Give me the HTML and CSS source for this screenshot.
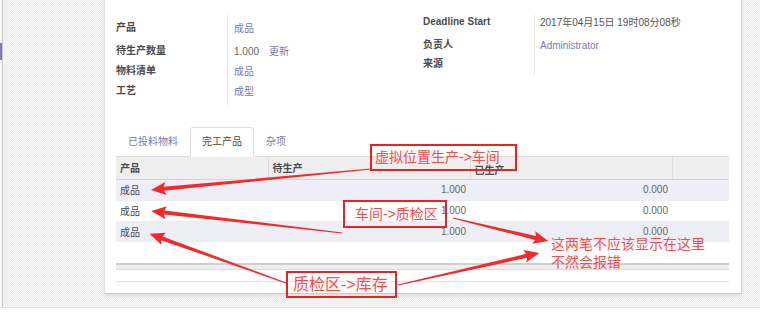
FILE: index.html
```html
<!DOCTYPE html>
<html lang="zh-CN">
<head>
<meta charset="utf-8">
<title>制造订单</title>
<link rel="stylesheet" href="styles.css">
</head>
<body>
<div class="app">
  <div class="main">
    <div class="sidebar"><div class="sidebar-mark"></div></div>
    <div class="workspace">
      <div class="sheet">
        <div class="groups">
          <div class="group group-left">
            <div class="field fa1"><div class="label">产品</div><div class="value link">成品</div></div>
            <div class="field fa2"><div class="label">待生产数量</div><div class="value"><span class="qty">1.000</span><span class="link update">更新</span></div></div>
            <div class="field fa3"><div class="label">物料清单</div><div class="value link">成品</div></div>
            <div class="field fa4"><div class="label">工艺</div><div class="value link">成型</div></div>
          </div>
          <div class="group group-right">
            <div class="field fb1"><div class="label">Deadline Start</div><div class="value">2017年04月15日 19时08分08秒</div></div>
            <div class="field fb2"><div class="label">负责人</div><div class="value link">Administrator</div></div>
            <div class="field fb3"><div class="label">来源</div><div class="value"></div></div>
          </div>
        </div>

        <div class="tabs">
          <div class="tab">已投料物料</div>
          <div class="tab active">完工产品</div>
          <div class="tab">杂项</div>
        </div>

        <table class="list">
          <colgroup>
            <col class="c1"><col class="c2"><col class="c3"><col class="c4">
          </colgroup>
          <thead>
            <tr><th>产品</th><th>待生产</th><th class="th-done">已生产</th><th></th></tr>
          </thead>
          <tbody>
            <tr class="odd"><td>成品</td><td class="num">1.000</td><td class="num">0.000</td><td></td></tr>
            <tr><td>成品</td><td class="num">1.000</td><td class="num">0.000</td><td></td></tr>
            <tr class="odd"><td>成品</td><td class="num">1.000</td><td class="num">0.000</td><td></td></tr>
          </tbody>
        </table>
        <div class="list-foot"></div>
        <div class="sheet-sep"></div>
      </div>
    </div>
  </div>
  <div class="bottom"></div>

  <div class="annotations">
    <svg class="arrows" width="760" height="320" viewBox="0 0 760 320">
      <g fill="#f42a2a">
        <path transform="translate(371 169) rotate(174.55)" d="M0,-0.5 L208,-2 L206,-6.5 L221,0 L206,6.5 L208,2 L0,0.5 Z"/>
        <path transform="translate(342 233) rotate(186.57)" d="M0,-0.5 L179,-2 L177,-6.5 L192,0 L177,6.5 L179,2 L0,0.5 Z"/>
        <path transform="translate(286 283) rotate(-160.19)" d="M0,-0.5 L132,-2 L130,-6.5 L145,0 L130,6.5 L132,2 L0,0.5 Z"/>
        <path transform="translate(453 218) rotate(13.61)" d="M0,-0.5 L85,-2 L83,-6.5 L98,0 L83,6.5 L85,2 L0,0.5 Z"/>
        <path transform="translate(398 285) rotate(-12.79)" d="M0,-0.5 L132,-2 L130,-6.5 L145,0 L130,6.5 L132,2 L0,0.5 Z"/>
      </g>
    </svg>
    <div class="anno-box box-1">虚拟位置生产-&gt;车间</div>
    <div class="anno-box box-2">车间-&gt;质检区</div>
    <div class="anno-box box-3">质检区-&gt;库存</div>
    <div class="anno-note">这两笔不应该显示在这里<br>不然会报错</div>
  </div>
</div>
</body>
</html>
```
FILE: styles.css
```css
* { box-sizing: border-box; }

html, body {
  margin: 0;
  padding: 0;
}

body {
  width: 760px;
  height: 320px;
  overflow: hidden;
  font-family: "Liberation Sans", Arial, "Noto Sans CJK SC", sans-serif;
  font-size: 10px;
  color: #4c4c4c;
  background: #fff;
}

.app {
  position: relative;
  width: 760px;
  height: 320px;
  background: #fff;
}

.main {
  display: flex;
  height: 308px;
  border-bottom: 1px solid #dedede;
  background-color: #f3f3f3;
  background-image: conic-gradient(#ececec 25%, #f8f8f8 0 50%, #ececec 0 75%, #f8f8f8 0);
  background-size: 2px 2px;
}

.sidebar {
  width: 3px;
  background: #f7f7f7;
  border-right: 1px solid #c9c9c9;
}

.sidebar-mark {
  margin-top: 43px;
  width: 2px;
  height: 17px;
  background: #7c7bad;
}

.workspace {
  flex: 1;
  padding-left: 101px;
}

.sheet {
  width: 638px;
  background: #fff;
  border-left: 1px solid #e2e2e2;
  border-right: 1px solid #d4d4d4;
  border-bottom: 1px solid #cbcbcb;
  box-shadow: 0 2px 4px rgba(0, 0, 0, 0.08);
  padding: 0 12px 11px 11px;
}

/* ---------- field groups ---------- */
.groups {
  display: flex;
  padding-top: 15px;
}

.group-left { width: 307px; }
.group-right { flex: 1; }

.field {
  display: flex;
}

.label {
  width: 111px;
  line-height: 14px;
  font-weight: bold;
  color: #4c4c4c;
  white-space: nowrap;
}

.value {
  flex: 1;
  line-height: 14px;
  border-left: 1px solid #e6e6e6;
  padding-left: 6px;
  color: #555;
  white-space: nowrap;
}

.group-right .value { padding-left: 5px; }

.link { color: #7c7bad; }
.qty { color: #666; }
.update { margin-left: 10px; }

.fa1 { height: 29px; }
.fa1 .label { padding-top: 6px; }
.fa1 .value { padding-top: 7px; }
.fa2 { height: 20px; }
.fa3 { height: 20px; }
.fa4 { height: 21px; }
.fa2 .value, .fa3 .value, .fa4 .value { padding-top: 1px; }

.fb1 { height: 23px; }
.fb2 { height: 19px; }
.fb3 { height: 18px; }
.fb1 .value, .fb2 .value { padding-top: 1px; }

/* ---------- tabs ---------- */
.tabs {
  display: flex;
  margin-top: 22px;
  height: 30px;
  border-bottom: 1px solid #dddddd;
}

.tab {
  height: 30px;
  padding: 0 11px;
  line-height: 28px;
  border: 1px solid transparent;
  border-radius: 3px 3px 0 0;
  color: #7c7bad;
  white-space: nowrap;
}

.tab.active {
  border-color: #dddddd #dddddd #ffffff;
  background: #fff;
  color: #4c4c4c;
}

/* ---------- list ---------- */
.list {
  width: 613px;
  border-collapse: collapse;
  table-layout: fixed;
}

.c1 { width: 152px; }
.c2 { width: 202px; }
.c3 { width: 202px; }
.c4 { width: 57px; }

.list th {
  height: 22px;
  padding: 0 3px 0 4px;
  background: #eeeeee;
  border-bottom: 1px solid #d6d6d6;
  border-left: 1px solid #dcdcdc;
  text-align: left;
  font-weight: bold;
  color: #4c4c4c;
  white-space: nowrap;
}

.list th:first-child { border-left: 0; }

.list th.th-done {
  padding-top: 6px;
  line-height: 12px;
  overflow: hidden;
}

.list td {
  height: 21px;
  padding: 0 4px;
  border-top: 1px solid #ececf2;
  color: #4c4c4c;
}

.list tbody tr:first-child td { border-top: 0; }

.list tr.odd td { background: #eeeef6; }

.list td.num {
  text-align: right;
  color: #666;
}

.list-foot {
  margin-top: 21px;
  height: 7px;
  border-top: 2px solid #cfcfcf;
  border-bottom: 1px solid #dddddd;
  background: #efefef;
}

.sheet-sep {
  margin-top: 11px;
  height: 1px;
  background: #e3e3e3;
}

.bottom {
  height: 12px;
  background: #fff;
}

/* ---------- annotation overlay ---------- */
.annotations {
  position: absolute;
  left: 0;
  top: 0;
  width: 760px;
  height: 320px;
  pointer-events: none;
}

.arrows {
  position: absolute;
  left: 0;
  top: 0;
}

.anno-box {
  position: absolute;
  border: 2px solid #ea2222;
  color: #ff4a4a;
  font-family: "Liberation Sans", "Noto Sans CJK SC", sans-serif;
  font-size: 14px;
  white-space: nowrap;
}

.box-1 {
  left: 370px;
  top: 144px;
  width: 147px;
  height: 27px;
  padding-left: 3px;
  line-height: 23px;
}

.box-2 {
  left: 343px;
  top: 200px;
  width: 104px;
  height: 28px;
  padding-left: 10px;
  line-height: 24px;
}

.box-3 {
  left: 286px;
  top: 271px;
  width: 111px;
  height: 27px;
  padding-left: 5px;
  line-height: 23px;
  font-size: 16px;
}

.anno-note {
  position: absolute;
  left: 551px;
  top: 235px;
  font-family: "Liberation Sans", "Noto Sans CJK SC", sans-serif;
  font-size: 14px;
  line-height: 18px;
  color: #ff4a4a;
  white-space: nowrap;
}
```
